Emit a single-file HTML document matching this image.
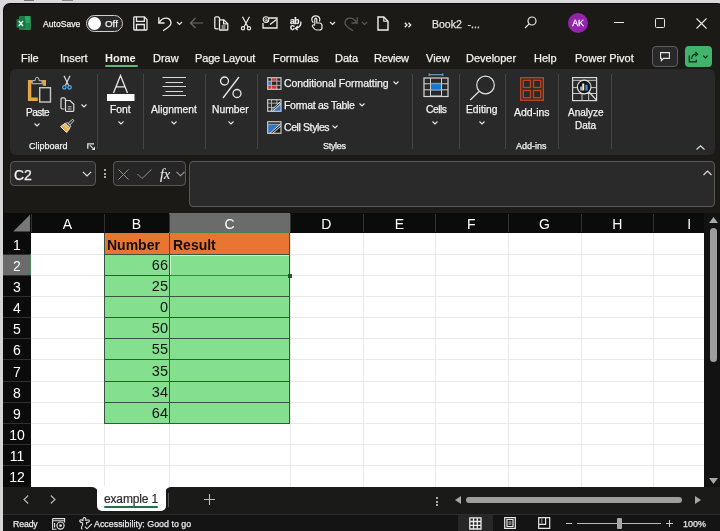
<!DOCTYPE html>
<html><head><meta charset="utf-8">
<style>
*{margin:0;padding:0;box-sizing:border-box}
html,body{width:720px;height:531px;overflow:hidden;background:#dadadc;font-family:"Liberation Sans",sans-serif}
.a{position:absolute}
#win{position:absolute;left:2.5px;top:2.5px;width:722px;height:532px;background:#1c1a17;border-top:1px solid #0b0b09;border-left:1px solid #0b0b09;border-radius:7px 8px 0 7px;overflow:hidden}
.t{position:absolute;white-space:nowrap;color:#f2f2f2;line-height:1;-webkit-text-stroke:0.25px currentColor;will-change:transform}
svg{position:absolute;overflow:visible}
.rib{position:absolute;left:10px;top:69px;width:705px;height:86px;background:#292929;border-radius:6px}
.sep{position:absolute;top:74px;width:1px;height:75px;background:#454545}
.car{position:absolute}
.hdr{position:absolute;background:#0b0b0b}
div.a:not(:empty){will-change:transform}
.ch{position:absolute;top:213px;height:20px;color:#fff;font-size:14px;text-align:center;line-height:20px;border-left:1px solid #3a3a3a}
.rh{position:absolute;left:3px;width:28px;color:#fff;font-size:14px;text-align:center}
</style></head><body>
<div id="win"></div>
<!-- title bar -->
<svg class="a" style="left:16px;top:15px" width="15" height="15" viewBox="0 0 15 15">
  <rect x="3" y="1" width="11.5" height="14" rx="1" fill="#1b7a45"/>
  <rect x="9" y="1" width="5.5" height="14" rx="0.8" fill="#2aa866"/>
  <rect x="9" y="8" width="5.5" height="7" fill="#1f8a4f"/>
  <rect x="0.5" y="4" width="9" height="9" rx="1.2" fill="#147a43"/>
  <path d="M2.8 6 L7 11 M7 6 L2.8 11" stroke="#f4f4f4" stroke-width="1.3"/>
</svg>
<div class="t" style="left:43px;top:20px;font-size:8.6px">AutoSave</div>
<div class="a" style="left:86px;top:15px;width:37px;height:17px;border:1px solid #cfcfcf;border-radius:9px;background:#292929"></div>
<div class="a" style="left:88px;top:17px;width:13px;height:13px;border-radius:50%;background:#fff"></div>
<div class="t" style="left:104.5px;top:19px;font-size:9.8px">Off</div>

<!-- save icon -->
<svg style="left:133px;top:16px" width="15" height="15" viewBox="0 0 15 15" fill="none" stroke="#ececec" stroke-width="1.3">
  <path d="M0.8 1.5 Q0.8 0.8 1.5 0.8 H11.3 L14 3.5 V13.3 Q14 14 13.3 14 H1.5 Q0.8 14 0.8 13.3 Z"/>
  <path d="M3.5 0.8 V5.3 H11.3 V0.8"/>
  <path d="M3.5 14 V8.5 H11.3 V14"/>
</svg>
<!-- undo -->
<svg style="left:157px;top:16px" width="16" height="16" viewBox="0 0 16 16" fill="none" stroke="#ececec" stroke-width="1.3">
  <path d="M1.8 1.2 V7 H7.5"/>
  <path d="M2 6.8 Q5 2 9.5 2.2 Q14 2.8 14 7.3 Q14 10 6 14.8"/>
</svg>
<svg style="left:176px;top:21px" width="7" height="5" viewBox="0 0 7 5" fill="none" stroke="#e8e8e8" stroke-width="1.1"><path d="M1 1 L3.5 3.5 L6 1"/></svg>
<!-- back arrow (disabled) -->
<svg style="left:189px;top:17px" width="15" height="12" viewBox="0 0 15 12" fill="none" stroke="#6a6a6a" stroke-width="1.2"><path d="M14 6 H1.5 M6.5 1 L1.5 6 L6.5 11"/></svg>
<!-- copy-doc icon -->
<svg style="left:214px;top:16px" width="15" height="15" viewBox="0 0 15 15" fill="none" stroke="#ececec" stroke-width="1.3">
  <path d="M4.5 12.8 H2 Q0.8 12.8 0.8 11.6 V2 Q0.8 0.8 2 0.8 H4 Q5 0.8 5.5 2 V3.8"/>
  <path d="M5.5 3.8 H9.8 L13.8 7.8 V13.4 Q13.8 14 13.2 14 H6.1 Q5.5 14 5.5 13.4 Z"/>
  <path d="M9.6 3.8 V7.8 H13.6"/>
  <path d="M7.5 10 H11.5 M7.5 12 H11.5" stroke-width="1"/>
</svg>
<!-- scissors -->
<svg style="left:240px;top:16px" width="12" height="15" viewBox="0 0 12 15" fill="none" stroke="#ececec" stroke-width="1.2">
  <path d="M2.5 0.8 L8 11 M9.5 0.8 L4 11"/>
  <circle cx="3" cy="12.2" r="1.6"/><circle cx="9" cy="12.2" r="1.6"/>
</svg>
<!-- email icon -->
<svg style="left:262px;top:16px" width="16" height="13" viewBox="0 0 16 13" fill="none" stroke="#ececec" stroke-width="1.3">
  <path d="M7 2 H15 V12 H1 V7"/><path d="M8 8.5 L14.5 3.5"/>
  <circle cx="4" cy="3.6" r="2.8" stroke-width="1.1"/><path d="M5 3.6 A1 1.2 0 1 0 5 3.7 V4.5 Q5 6.2 6.8 5.5" stroke-width="0.9"/>
</svg>
<!-- spelling abc -->
<div class="t" style="left:289.5px;top:16.5px;font-size:8.5px;letter-spacing:-0.4px;font-weight:bold;color:#ececec">ab</div>
<div class="t" style="left:289.5px;top:23px;font-size:8.5px;font-weight:bold;color:#ececec">c</div>
<svg style="left:294px;top:21px" width="8" height="9" viewBox="0 0 8 9" fill="none" stroke="#ececec" stroke-width="1.2"><path d="M6.8 0.5 Q7.5 4 5 6 Q3.5 7.3 1.5 7.3 M3.8 4.8 L1.3 7.3 L3.8 9"/></svg>
<!-- touch hand -->
<svg style="left:311px;top:15px" width="12" height="16" viewBox="0 0 12 16" fill="none" stroke="#ececec" stroke-width="1.2">
  <path d="M2.3 7.8 Q0.6 6.3 0.8 4 Q1.3 0.8 4.8 0.8 Q8.3 0.8 8.8 4 Q9 5.5 8.3 6.5"/>
  <path d="M3.8 9.5 V4.3 Q3.8 3.2 4.8 3.2 Q5.8 3.2 5.8 4.3 V8 H8.5 Q11 8.3 11 10.5 V12.5 Q11 15 8.5 15 H6 Q4 15 3 13.5 L1.5 11.5 Q1 10.5 2 10 Q3 9.5 3.8 10.5"/>
</svg>
<svg style="left:329px;top:21px" width="7" height="5" viewBox="0 0 7 5" fill="none" stroke="#e8e8e8" stroke-width="1.2"><path d="M1 1 L3.5 3.5 L6 1"/></svg>
<!-- redo disabled -->
<svg style="left:343px;top:16px" width="16" height="16" viewBox="0 0 16 16" fill="none" stroke="#5a5a5a" stroke-width="1.3">
  <path d="M14.2 1.2 V7 H8.5"/>
  <path d="M14 6.8 Q11 2 6.5 2.2 Q2 2.8 2 7.3 Q2 10 10 14.8"/>
</svg>
<svg style="left:361px;top:21px" width="7" height="5" viewBox="0 0 7 5" fill="none" stroke="#5a5a5a" stroke-width="1.1"><path d="M1 1 L3.5 3.5 L6 1"/></svg>
<!-- new doc -->
<svg style="left:377px;top:16px" width="12" height="15" viewBox="0 0 12 15" fill="none" stroke="#f0f0f0" stroke-width="1.4">
  <path d="M1 1 H6.8 L11 5.2 V14 H1 Z"/><path d="M6.8 1 V5.2 H11" stroke-width="1.1"/>
</svg>
<svg style="left:404px;top:21.5px" width="8" height="6" viewBox="0 0 8 6" fill="none" stroke="#f0f0f0" stroke-width="1.3"><path d="M0.8 0.8 L3 3 L0.8 5.2 M4.5 0.8 L6.7 3 L4.5 5.2"/></svg>
<div class="t" style="left:432px;top:19px;font-size:10.5px;color:#e2e2e2">Book2&nbsp;&nbsp;-...</div>
<!-- search -->
<svg style="left:524px;top:16px" width="13" height="13" viewBox="0 0 13 13" fill="none" stroke="#e8e8e8" stroke-width="1.2">
  <circle cx="8" cy="5" r="4"/><path d="M5.2 7.8 L1 12"/>
</svg>
<div class="a" style="left:568px;top:13px;width:20px;height:20px;border-radius:50%;background:#9423ae;color:#fff;font-size:8.8px;line-height:20px;text-align:center;-webkit-text-stroke:0.3px #fff">AK</div>
<div class="a" style="left:614px;top:22px;width:10px;height:1.2px;background:#e8e8e8"></div>
<div class="a" style="left:655px;top:18px;width:10px;height:10px;border:1.2px solid #e8e8e8;border-radius:1.5px"></div>
<svg style="left:696px;top:18px" width="11" height="11" viewBox="0 0 11 11" fill="none" stroke="#e8e8e8" stroke-width="1.1"><path d="M0.5 0.5 L10.5 10.5 M10.5 0.5 L0.5 10.5"/></svg>

<!-- tabs -->
<div class="t" style="left:21px;top:53px;font-size:11px">File</div>
<div class="t" style="left:60px;top:53px;font-size:11px">Insert</div>
<div class="t" style="left:105px;top:53px;font-size:11px;font-weight:bold;-webkit-text-stroke:0">Home</div>
<div class="a" style="left:105px;top:65px;width:33px;height:2px;background:#5cb87a;border-radius:1px"></div>
<div class="t" style="left:153px;top:53px;font-size:11px">Draw</div>
<div class="t" style="left:195px;top:53px;font-size:11px;letter-spacing:-0.15px">Page Layout</div>
<div class="t" style="left:273px;top:53px;font-size:11px">Formulas</div>
<div class="t" style="left:335px;top:53px;font-size:11px">Data</div>
<div class="t" style="left:374px;top:53px;font-size:11px;letter-spacing:-0.2px">Review</div>
<div class="t" style="left:426px;top:53px;font-size:11px">View</div>
<div class="t" style="left:466px;top:53px;font-size:11px">Developer</div>
<div class="t" style="left:534px;top:53px;font-size:11px">Help</div>
<div class="t" style="left:575px;top:53px;font-size:11px">Power Pivot</div>
<div class="a" style="left:652px;top:46px;width:26px;height:21px;border:1px solid #5e5e5e;border-radius:4px;background:#292929"></div>
<svg style="left:660px;top:52px" width="11" height="10" viewBox="0 0 11 10" fill="none" stroke="#e8e8e8" stroke-width="1.1"><path d="M0.6 0.6 H9.4 V6.4 H3.6 L1.4 8.6 V6.4 H0.6 Z"/></svg>
<div class="a" style="left:685px;top:46px;width:27px;height:21px;border-radius:4px;background:#40b46b"></div>
<svg style="left:688px;top:51px" width="21" height="12" viewBox="0 0 21 12" fill="none" stroke="#0d2614" stroke-width="1.2">
  <path d="M1.3 4.5 V10.8 H8.3 V8.8"/><path d="M3.8 8 Q3.8 3.2 8.3 3.2"/><path d="M7.3 1 L9.6 3.2 L7.3 5.4"/>
  <path d="M15.2 4.6 L17.4 6.8 L19.6 4.6"/>
</svg>

<!-- ribbon -->
<div class="rib"></div>
<div class="sep" style="left:97px"></div>
<div class="sep" style="left:143px"></div>
<div class="sep" style="left:205px"></div>
<div class="sep" style="left:257px"></div>
<div class="sep" style="left:412px"></div>
<div class="sep" style="left:459px"></div>
<div class="sep" style="left:505px"></div>
<div class="sep" style="left:558px"></div>
<div class="sep" style="left:611px"></div>
<!-- paste -->
<svg style="left:27px;top:76px" width="26" height="28" viewBox="0 0 26 28">
  <path d="M2.6 5.6 H17.3 V23.3 H2.6 Z" fill="none" stroke="#e3a640" stroke-width="3.4"/>
  <path d="M5.2 7.6 V4.6 H8 Q8.5 1.2 10.1 1.2 Q11.7 1.2 12.2 4.6 H15 V7.6 Z" fill="#282828" stroke="#a8a8a8" stroke-width="1.1"/>
  <rect x="10.8" y="9.8" width="14.5" height="18" fill="#282828"/>
  <rect x="12.7" y="11.7" width="10.8" height="14.3" fill="none" stroke="#c8c8c8" stroke-width="1.4"/>
</svg>
<div class="t" style="left:25.5px;top:108px;font-size:10px;letter-spacing:-0.5px">Paste</div>
<svg style="left:34px;top:123px" width="6" height="4" viewBox="0 0 6 4" fill="none" stroke="#e8e8e8" stroke-width="1.1"><path d="M0.5 0.5 L3 3 L5.5 0.5"/></svg>
<!-- cut -->
<svg style="left:61px;top:75px" width="12" height="15" viewBox="0 0 12 15" fill="none" stroke-width="1.2">
  <path d="M3 0.8 L7.8 11 M9 0.8 L4.2 11" stroke="#dcdcdc"/>
  <circle cx="3.4" cy="12.3" r="1.7" stroke="#4fa3e8" stroke-width="1.3"/><circle cx="8.6" cy="12.3" r="1.7" stroke="#4fa3e8" stroke-width="1.3"/>
</svg>
<!-- copy -->
<svg style="left:60px;top:97px" width="15" height="15" viewBox="0 0 15 15" fill="none" stroke="#dcdcdc" stroke-width="1.2">
  <path d="M4.5 12 H2.2 Q1 12 1 10.8 V2 Q1 0.8 2.2 0.8 H4 Q5 0.8 5.5 2 L5.5 3.5"/>
  <path d="M5.5 3.5 H10 L13.8 7.3 V13.5 Q13.8 14.3 13 14.3 H6.3 Q5.5 14.3 5.5 13.5 Z"/>
  <path d="M7.8 9.8 H11.5 M7.8 12 H11.5" stroke-width="0.9"/>
</svg>
<svg style="left:81px;top:104px" width="6" height="4" viewBox="0 0 6 4" fill="none" stroke="#e8e8e8" stroke-width="1.1"><path d="M0.5 0.5 L3 3 L5.5 0.5"/></svg>
<!-- format painter -->
<svg style="left:60px;top:119px" width="15" height="15" viewBox="0 0 16 16">
  <g transform="translate(1.2 -1.5) rotate(45 8 8) scale(0.95)">
    <path d="M4.2 9.5 H11.8 L12.8 16 H3.2 Z" fill="#e9ad42"/>
    <path d="M4.2 9.5 H11.8 L12.8 16 H3.2 Z M5 7.5 H11 V9.5 H5 Z" fill="none" stroke="#e6e6e6" stroke-width="1"/>
    <path d="M3.7 12.2 H12.3" stroke="#e6e6e6" stroke-width="0.9"/>
    <rect x="6.8" y="0.5" width="2.4" height="7" rx="1.2" fill="none" stroke="#e6e6e6" stroke-width="1"/>
  </g>
</svg>
<div class="t" style="left:29px;top:142px;font-size:9px">Clipboard</div>
<svg style="left:87px;top:143px" width="9" height="8" viewBox="0 0 9 8"><path d="M0.8 5.8 V0.8 H7" fill="none" stroke="#e0e0e0" stroke-width="1.3"/><path d="M2.8 2.2 L6 5.4" stroke="#e0e0e0" stroke-width="1.1"/><path d="M8 3.5 V7 H4.5 Z" fill="#e0e0e0"/></svg>
<!-- font -->
<svg style="left:106px;top:74px" width="29" height="28" viewBox="0 0 29 28">
  <path d="M7.5 19 L14.5 1.5 L21.5 19 M10 12.8 H19" fill="none" stroke="#e8e8e8" stroke-width="1.3"/>
  <rect x="1" y="20" width="27.5" height="7" fill="#ffffff"/>
</svg>
<div class="t" style="left:110px;top:105px;font-size:10.3px">Font</div>
<svg style="left:118px;top:121px" width="6" height="4" viewBox="0 0 6 4" fill="none" stroke="#e8e8e8" stroke-width="1.1"><path d="M0.5 0.5 L3 3 L5.5 0.5"/></svg>
<!-- alignment -->
<svg style="left:162px;top:76px" width="25" height="21" viewBox="0 0 25 21" fill="none" stroke="#d8d8d8" stroke-width="1.2">
  <path d="M0.5 1.5 H24 M3.5 6.5 H21 M0.5 10.5 H24 M3.5 15.5 H21 M0.5 19.5 H24"/>
</svg>
<div class="t" style="left:151px;top:105px;font-size:10.3px">Alignment</div>
<svg style="left:171px;top:121px" width="6" height="4" viewBox="0 0 6 4" fill="none" stroke="#e8e8e8" stroke-width="1.1"><path d="M0.5 0.5 L3 3 L5.5 0.5"/></svg>
<!-- number -->
<svg style="left:219px;top:76px" width="24" height="23" viewBox="0 0 24 23" fill="none" stroke="#e8e8e8" stroke-width="1.3">
  <circle cx="5.5" cy="5" r="4"/><circle cx="18" cy="17.5" r="4"/><path d="M20 1 L4 22"/>
</svg>
<div class="t" style="left:212px;top:105px;font-size:10.3px">Number</div>
<svg style="left:228px;top:121px" width="6" height="4" viewBox="0 0 6 4" fill="none" stroke="#e8e8e8" stroke-width="1.1"><path d="M0.5 0.5 L3 3 L5.5 0.5"/></svg>
<!-- styles -->
<svg style="left:267px;top:76.5px" width="15" height="13" viewBox="0 0 15 13">
  <rect x="4.5" y="1" width="5" height="3" fill="#e0322f"/>
  <rect x="1" y="8.5" width="9" height="3.5" fill="#e0322f"/>
  <rect x="1" y="4" width="3.5" height="4.5" fill="#3d7cc2"/>
  <rect x="0.7" y="0.7" width="13.3" height="11.6" fill="none" stroke="#c8c8c8" stroke-width="1.2"/>
  <path d="M0.7 4.2 H14 M0.7 8.4 H14 M4.5 0.7 V12.3 M9.8 0.7 V12.3" stroke="#b8b8b8" stroke-width="0.9"/>
</svg>
<div class="t" style="left:284px;top:78px;font-size:10.5px;letter-spacing:-0.05px">Conditional Formatting</div>
<svg style="left:393px;top:81px" width="6" height="4" viewBox="0 0 6 4" fill="none" stroke="#e8e8e8" stroke-width="1.1"><path d="M0.5 0.5 L3 3 L5.5 0.5"/></svg>
<svg style="left:267px;top:98.5px" width="15" height="13" viewBox="0 0 15 13">
  <path d="M4.5 12.3 L14 4 V12.3 Z" fill="#2f74c6"/>
  <rect x="0.7" y="0.7" width="13.3" height="11.6" fill="none" stroke="#c8c8c8" stroke-width="1.2"/>
  <path d="M0.7 4.2 H14 M0.7 8.4 H8 M4.5 0.7 V12.3 M9.8 0.7 V5" stroke="#b8b8b8" stroke-width="0.9"/>
  <path d="M3.5 12 L13.5 2.5 M5.5 12.5 L14 4.5" stroke="#e6e6e6" stroke-width="1"/>
</svg>
<div class="t" style="left:284px;top:100px;font-size:10.5px;letter-spacing:-0.3px">Format as Table</div>
<svg style="left:359px;top:103px" width="6" height="4" viewBox="0 0 6 4" fill="none" stroke="#e8e8e8" stroke-width="1.1"><path d="M0.5 0.5 L3 3 L5.5 0.5"/></svg>
<svg style="left:267px;top:120.5px" width="15" height="13" viewBox="0 0 15 13">
  <path d="M1 3.5 H13.5 L2.5 12.3 H1 Z" fill="#2f74c6"/>
  <path d="M4.5 12.3 L14 4.5 V12.3 Z" fill="#1d1d1d"/>
  <rect x="0.7" y="0.7" width="13.3" height="11.6" fill="none" stroke="#c8c8c8" stroke-width="1.2"/>
  <path d="M0.7 3.3 H14" stroke="#b8b8b8" stroke-width="0.9"/>
  <path d="M3 12.3 L13.5 3 M5.5 12.5 L14 5" stroke="#e6e6e6" stroke-width="1"/>
</svg>
<div class="t" style="left:284px;top:122px;font-size:10.5px;letter-spacing:-0.4px">Cell Styles</div>
<svg style="left:332px;top:125px" width="6" height="4" viewBox="0 0 6 4" fill="none" stroke="#e8e8e8" stroke-width="1.1"><path d="M0.5 0.5 L3 3 L5.5 0.5"/></svg>
<div class="t" style="left:323px;top:142px;font-size:9px;letter-spacing:-0.3px">Styles</div>
<!-- cells -->
<svg style="left:423px;top:73px" width="26" height="25" viewBox="0 0 26 25">
  <path d="M6.2 1.8 H19.8 M6.2 0.5 V3 M19.8 0.5 V3" stroke="#6fb3f0" stroke-width="1.1"/>
  <rect x="7.5" y="10.8" width="11" height="6" fill="#1476d2" stroke="#5fb0f5" stroke-width="0.8"/>
  <rect x="1" y="5" width="24" height="18.5" fill="none" stroke="#d8d8d8" stroke-width="1.2"/>
  <path d="M1 10.8 H7.5 M18.5 10.8 H25 M1 16.8 H7.5 M18.5 16.8 H25 M7.5 5 V23.5 M18.5 5 V23.5 M7.5 5 M7.5 23 H18.5" stroke="#d0d0d0" stroke-width="1"/>
  <path d="M7.5 10.3 H18.5 M7.5 17.3 H18.5" stroke="#bcbcbc" stroke-width="0.6"/>
</svg>
<div class="t" style="left:425.5px;top:105px;font-size:10.3px;letter-spacing:-0.5px">Cells</div>
<svg style="left:432px;top:121px" width="6" height="4" viewBox="0 0 6 4" fill="none" stroke="#e8e8e8" stroke-width="1.1"><path d="M0.5 0.5 L3 3 L5.5 0.5"/></svg>
<!-- editing -->
<svg style="left:468.5px;top:74.5px" width="27" height="26" viewBox="0 0 27 26" fill="none" stroke="#e0e0e0" stroke-width="1.2">
  <circle cx="16.5" cy="10" r="8.8"/><path d="M10.2 16.3 L1.2 25"/>
</svg>
<div class="t" style="left:466px;top:105px;font-size:10.3px">Editing</div>
<svg style="left:479px;top:121px" width="6" height="4" viewBox="0 0 6 4" fill="none" stroke="#e8e8e8" stroke-width="1.1"><path d="M0.5 0.5 L3 3 L5.5 0.5"/></svg>
<!-- add-ins -->
<svg style="left:520px;top:77px" width="24" height="24" viewBox="0 0 24 24" fill="none" stroke="#bd4420" stroke-width="1.4">
  <rect x="0.7" y="0.7" width="22.6" height="22.6"/>
  <rect x="3.3" y="3.3" width="7.2" height="7.2"/><rect x="13.5" y="3.3" width="7.2" height="7.2"/>
  <rect x="3.3" y="13.5" width="7.2" height="7.2"/><rect x="13.5" y="13.5" width="7.2" height="7.2"/>
</svg>
<div class="t" style="left:514px;top:107px;font-size:10.5px">Add-ins</div>
<div class="t" style="left:516px;top:142px;font-size:9px">Add-ins</div>
<!-- analyze data -->
<svg style="left:572px;top:77px" width="26" height="25" viewBox="0 0 26 25" fill="none">
  <rect x="0.6" y="0.6" width="24" height="23" stroke="#d8d8d8" stroke-width="1.2"/>
  <path d="M0.6 3.3 H24.6 M0.6 10.6 H5 M19 10.6 H24.6 M0.6 16.5 H24.6 M10 16.5 V23.6 M16.7 16.5 V23.6" stroke="#c8c8c8" stroke-width="1"/>
  <circle cx="12.2" cy="10" r="6.8" fill="#141414" stroke="#e0e0e0" stroke-width="1.2"/>
  <path d="M17 15 L24 22.6" stroke="#e0e0e0" stroke-width="1.3"/>
  <rect x="8.3" y="9.5" width="1.5" height="4" fill="#d0d0d0"/><rect x="10.2" y="6.5" width="2" height="7" fill="#e8e8e8"/><rect x="13.3" y="7.8" width="2.3" height="5.7" fill="#3c8fdc"/>
</svg>
<div class="t" style="left:568px;top:107.5px;font-size:10px">Analyze</div>
<div class="t" style="left:574.5px;top:120.5px;font-size:10px">Data</div>
<svg style="left:696px;top:145px" width="9" height="5" viewBox="0 0 9 5" fill="none" stroke="#e0e0e0" stroke-width="1.1"><path d="M0.5 4.5 L4.5 0.8 L8.5 4.5"/></svg>

<!-- formula bar -->
<div class="a" style="left:10px;top:161px;width:86px;height:25px;background:#2a2a2a;border:1px solid #575757;border-radius:4px"></div>
<div class="t" style="left:14px;top:168px;font-size:14px">C2</div>
<svg style="left:82px;top:171px" width="10" height="6" viewBox="0 0 10 6" fill="none" stroke="#e0e0e0" stroke-width="1.2"><path d="M0.8 0.8 L5 5 L9.2 0.8"/></svg>
<div class="a" style="left:104px;top:169px;width:2px;height:2px;background:#ddd;border-radius:1px"></div>
<div class="a" style="left:104px;top:172.5px;width:2px;height:2px;background:#ddd;border-radius:1px"></div>
<div class="a" style="left:104px;top:176px;width:2px;height:2px;background:#ddd;border-radius:1px"></div>
<div class="a" style="left:113px;top:161px;width:73px;height:25px;background:#262626;border:1px solid #575757;border-radius:4px"></div>
<svg style="left:118px;top:169px" width="11" height="11" viewBox="0 0 11 11" fill="none" stroke="#8e8e8e" stroke-width="1"><path d="M0.5 0.5 L10.5 10.5 M10.5 0.5 L0.5 10.5"/></svg>
<svg style="left:137px;top:169px" width="15" height="10" viewBox="0 0 15 10" fill="none" stroke="#8e8e8e" stroke-width="1"><path d="M0.5 5 L5 9.5 L14.5 0.5"/></svg>
<div class="t" style="left:160px;top:167px;font-size:14.5px;font-family:'Liberation Serif',serif;font-style:italic;color:#e8e8e8;-webkit-text-stroke:0.1px #e8e8e8">f<span style="font-size:14px">x</span></div>
<svg style="left:176px;top:171px" width="9" height="6" viewBox="0 0 9 6" fill="none" stroke="#a0a0a0" stroke-width="1.1"><path d="M0.5 0.8 L4.5 4.8 L8.5 0.8"/></svg>
<div class="a" style="left:189px;top:161px;width:526px;height:46px;background:#2a2a2a;border:1px solid #575757;border-radius:4px"></div>
<svg style="left:703px;top:170px" width="9" height="6" viewBox="0 0 9 6" fill="none" stroke="#e0e0e0" stroke-width="1.1"><path d="M0.5 5 L4.5 1 L8.5 5"/></svg>
<!-- grid -->
<div class="a" style="left:3px;top:213px;width:701px;height:274px;background:#ffffff"></div>
<div class="a" style="left:3px;top:213px;width:701px;height:20px;background:#0b0b0b"></div>
<div class="a" style="left:3px;top:213px;width:28px;height:274px;background:#0b0b0b"></div>
<svg style="left:3px;top:213px" width="28" height="20" viewBox="0 0 28 20"><path d="M27 1.8 V18.6 H10.2 Z" fill="#777"/></svg>

<div class="a" style="left:31px;top:213px;width:73px;height:20px;background:transparent;color:#fff;font-size:14px;line-height:20px;padding-top:1px;text-align:center">A</div>
<div class="a" style="left:31px;top:214px;width:1px;height:18px;background:#333"></div>
<div class="a" style="left:104px;top:213px;width:65px;height:20px;background:transparent;color:#fff;font-size:14px;line-height:20px;padding-top:1px;text-align:center">B</div>
<div class="a" style="left:104px;top:214px;width:1px;height:18px;background:#333"></div>
<div class="a" style="left:169px;top:213px;width:121px;height:20px;background:#6b6b6b;color:#fff;font-size:14px;line-height:20px;padding-top:1px;text-align:center">C</div>
<div class="a" style="left:169px;top:214px;width:1px;height:18px;background:#333"></div>
<div class="a" style="left:290px;top:213px;width:72.69999999999999px;height:20px;background:transparent;color:#fff;font-size:14px;line-height:20px;padding-top:1px;text-align:center">D</div>
<div class="a" style="left:290px;top:214px;width:1px;height:18px;background:#333"></div>
<div class="a" style="left:362.7px;top:213px;width:72.69999999999999px;height:20px;background:transparent;color:#fff;font-size:14px;line-height:20px;padding-top:1px;text-align:center">E</div>
<div class="a" style="left:362.7px;top:214px;width:1px;height:18px;background:#333"></div>
<div class="a" style="left:435.4px;top:213px;width:72.70000000000005px;height:20px;background:transparent;color:#fff;font-size:14px;line-height:20px;padding-top:1px;text-align:center">F</div>
<div class="a" style="left:435.4px;top:214px;width:1px;height:18px;background:#333"></div>
<div class="a" style="left:508.1px;top:213px;width:72.69999999999993px;height:20px;background:transparent;color:#fff;font-size:14px;line-height:20px;padding-top:1px;text-align:center">G</div>
<div class="a" style="left:508.1px;top:214px;width:1px;height:18px;background:#333"></div>
<div class="a" style="left:580.8px;top:213px;width:72.60000000000002px;height:20px;background:transparent;color:#fff;font-size:14px;line-height:20px;padding-top:1px;text-align:center">H</div>
<div class="a" style="left:580.8px;top:214px;width:1px;height:18px;background:#333"></div>
<div class="a" style="left:653.4px;top:213px;width:72.60000000000002px;height:20px;background:transparent;color:#fff;font-size:14px;line-height:20px;padding-top:1px;text-align:center">I</div>
<div class="a" style="left:653.4px;top:214px;width:1px;height:18px;background:#333"></div>
<div class="a" style="left:104px;top:233px;width:1px;height:254px;background:#e9e9e9"></div>
<div class="a" style="left:169px;top:233px;width:1px;height:254px;background:#e9e9e9"></div>
<div class="a" style="left:290px;top:233px;width:1px;height:254px;background:#e9e9e9"></div>
<div class="a" style="left:362.7px;top:233px;width:1px;height:254px;background:#e9e9e9"></div>
<div class="a" style="left:435.4px;top:233px;width:1px;height:254px;background:#e9e9e9"></div>
<div class="a" style="left:508.1px;top:233px;width:1px;height:254px;background:#e9e9e9"></div>
<div class="a" style="left:580.8px;top:233px;width:1px;height:254px;background:#e9e9e9"></div>
<div class="a" style="left:653.4px;top:233px;width:1px;height:254px;background:#e9e9e9"></div>
<div class="a" style="left:31px;top:254px;width:673px;height:1px;background:#e9e9e9"></div>
<div class="a" style="left:31px;top:275px;width:673px;height:1px;background:#e9e9e9"></div>
<div class="a" style="left:31px;top:296px;width:673px;height:1px;background:#e9e9e9"></div>
<div class="a" style="left:31px;top:317px;width:673px;height:1px;background:#e9e9e9"></div>
<div class="a" style="left:31px;top:338px;width:673px;height:1px;background:#e9e9e9"></div>
<div class="a" style="left:31px;top:359px;width:673px;height:1px;background:#e9e9e9"></div>
<div class="a" style="left:31px;top:381px;width:673px;height:1px;background:#e9e9e9"></div>
<div class="a" style="left:31px;top:402px;width:673px;height:1px;background:#e9e9e9"></div>
<div class="a" style="left:31px;top:423px;width:673px;height:1px;background:#e9e9e9"></div>
<div class="a" style="left:31px;top:444px;width:673px;height:1px;background:#e9e9e9"></div>
<div class="a" style="left:31px;top:465px;width:673px;height:1px;background:#e9e9e9"></div>
<div class="a" style="left:3px;top:233px;width:28px;height:21px;background:transparent;color:#fff;font-size:14px;line-height:25px;text-align:center">1</div>
<div class="a" style="left:3px;top:254px;width:28px;height:21px;background:#6b6b6b;color:#fff;font-size:14px;line-height:25px;text-align:center">2</div>
<div class="a" style="left:3px;top:254px;width:28px;height:1px;background:#2f2f2f"></div>
<div class="a" style="left:3px;top:275px;width:28px;height:21px;background:transparent;color:#fff;font-size:14px;line-height:25px;text-align:center">3</div>
<div class="a" style="left:3px;top:275px;width:28px;height:1px;background:#2f2f2f"></div>
<div class="a" style="left:3px;top:296px;width:28px;height:21px;background:transparent;color:#fff;font-size:14px;line-height:25px;text-align:center">4</div>
<div class="a" style="left:3px;top:296px;width:28px;height:1px;background:#2f2f2f"></div>
<div class="a" style="left:3px;top:317px;width:28px;height:21px;background:transparent;color:#fff;font-size:14px;line-height:25px;text-align:center">5</div>
<div class="a" style="left:3px;top:317px;width:28px;height:1px;background:#2f2f2f"></div>
<div class="a" style="left:3px;top:338px;width:28px;height:21px;background:transparent;color:#fff;font-size:14px;line-height:25px;text-align:center">6</div>
<div class="a" style="left:3px;top:338px;width:28px;height:1px;background:#2f2f2f"></div>
<div class="a" style="left:3px;top:359px;width:28px;height:22px;background:transparent;color:#fff;font-size:14px;line-height:26px;text-align:center">7</div>
<div class="a" style="left:3px;top:359px;width:28px;height:1px;background:#2f2f2f"></div>
<div class="a" style="left:3px;top:381px;width:28px;height:21px;background:transparent;color:#fff;font-size:14px;line-height:25px;text-align:center">8</div>
<div class="a" style="left:3px;top:381px;width:28px;height:1px;background:#2f2f2f"></div>
<div class="a" style="left:3px;top:402px;width:28px;height:21px;background:transparent;color:#fff;font-size:14px;line-height:25px;text-align:center">9</div>
<div class="a" style="left:3px;top:402px;width:28px;height:1px;background:#2f2f2f"></div>
<div class="a" style="left:3px;top:423px;width:28px;height:21px;background:transparent;color:#fff;font-size:14px;line-height:25px;text-align:center">10</div>
<div class="a" style="left:3px;top:423px;width:28px;height:1px;background:#2f2f2f"></div>
<div class="a" style="left:3px;top:444px;width:28px;height:21px;background:transparent;color:#fff;font-size:14px;line-height:25px;text-align:center">11</div>
<div class="a" style="left:3px;top:444px;width:28px;height:1px;background:#2f2f2f"></div>
<div class="a" style="left:3px;top:465px;width:28px;height:21px;background:transparent;color:#fff;font-size:14px;line-height:25px;text-align:center">12</div>
<div class="a" style="left:3px;top:465px;width:28px;height:1px;background:#2f2f2f"></div>
<div class="a" style="left:104px;top:233px;width:186px;height:21px;background:#e97533"></div>
<div class="t" style="left:107px;top:233px;line-height:21px;font-size:14px;font-weight:bold;color:#111;padding-top:2px;-webkit-text-stroke:0">Number</div>
<div class="t" style="left:173px;top:233px;line-height:21px;font-size:14px;font-weight:bold;color:#111;padding-top:2px;-webkit-text-stroke:0">Result</div>
<div class="a" style="left:104px;top:254px;width:186px;height:169px;background:#84e08f"></div>
<div class="a" style="left:104px;top:255px;width:64px;height:21px;line-height:21px;font-size:14.5px;color:#111;text-align:right">66</div>
<div class="a" style="left:104px;top:276px;width:64px;height:21px;line-height:21px;font-size:14.5px;color:#111;text-align:right">25</div>
<div class="a" style="left:104px;top:297px;width:64px;height:21px;line-height:21px;font-size:14.5px;color:#111;text-align:right">0</div>
<div class="a" style="left:104px;top:318px;width:64px;height:21px;line-height:21px;font-size:14.5px;color:#111;text-align:right">50</div>
<div class="a" style="left:104px;top:339px;width:64px;height:21px;line-height:21px;font-size:14.5px;color:#111;text-align:right">55</div>
<div class="a" style="left:104px;top:360px;width:64px;height:22px;line-height:22px;font-size:14.5px;color:#111;text-align:right">35</div>
<div class="a" style="left:104px;top:382px;width:64px;height:21px;line-height:21px;font-size:14.5px;color:#111;text-align:right">34</div>
<div class="a" style="left:104px;top:403px;width:64px;height:21px;line-height:21px;font-size:14.5px;color:#111;text-align:right">64</div>
<div class="a" style="left:104px;top:254px;width:186px;height:1px;background:#36573d"></div>
<div class="a" style="left:104px;top:275px;width:186px;height:1px;background:#36573d"></div>
<div class="a" style="left:104px;top:296px;width:186px;height:1px;background:#36573d"></div>
<div class="a" style="left:104px;top:317px;width:186px;height:1px;background:#36573d"></div>
<div class="a" style="left:104px;top:338px;width:186px;height:1px;background:#36573d"></div>
<div class="a" style="left:104px;top:359px;width:186px;height:1px;background:#36573d"></div>
<div class="a" style="left:104px;top:381px;width:186px;height:1px;background:#36573d"></div>
<div class="a" style="left:104px;top:402px;width:186px;height:1px;background:#36573d"></div>
<div class="a" style="left:104px;top:423px;width:186px;height:1px;background:#36573d"></div>
<div class="a" style="left:104px;top:233px;width:1px;height:191px;background:#36573d"></div>
<div class="a" style="left:169px;top:233px;width:1px;height:191px;background:#36573d"></div>
<div class="a" style="left:289px;top:233px;width:1px;height:191px;background:#36573d"></div>
<div class="a" style="left:170px;top:255px;width:119px;height:20px;border:1px solid #c8f5cc;border-right:none;border-bottom:none"></div>
<div class="a" style="left:170px;top:275px;width:119px;height:1px;background:#4f7f58"></div>
<div class="a" style="left:288px;top:274px;width:4px;height:4px;background:#1e5b30"></div>

<div class="a" style="left:169px;top:232px;width:121px;height:1px;background:#4a7a52"></div>
<div class="a" style="left:30px;top:254px;width:1px;height:21px;background:#4a8a58"></div>
<!-- vertical scrollbar -->
<div class="a" style="left:704px;top:213px;width:16px;height:274px;background:#121212"></div>
<svg style="left:709px;top:217px" width="9" height="6" viewBox="0 0 9 6"><path d="M0 6 L4.5 0 L9 6 Z" fill="#a8a8a8"/></svg>
<div class="a" style="left:710px;top:228px;width:7px;height:134px;background:#9e9e9e;border-radius:4px"></div>
<svg style="left:709px;top:478px" width="9" height="6" viewBox="0 0 9 6"><path d="M0 0 L4.5 6 L9 0 Z" fill="#a8a8a8"/></svg>
<!-- sheet tabs -->
<div class="a" style="left:90px;top:487px;width:80px;height:6px;background:#fff"></div>
<div class="a" style="left:3px;top:487px;width:95px;height:27px;background:#1a1a18;border-radius:0 6px 0 0"></div>
<div class="a" style="left:165px;top:487px;width:555px;height:27px;background:#1a1a18;border-radius:6px 0 0 0"></div>
<svg style="left:23px;top:495px" width="6" height="9" viewBox="0 0 6 9" fill="none" stroke="#bdbdbd" stroke-width="1.1"><path d="M5.2 0.5 L1 4.5 L5.2 8.5"/></svg>
<svg style="left:50px;top:495px" width="6" height="9" viewBox="0 0 6 9" fill="none" stroke="#bdbdbd" stroke-width="1.1"><path d="M0.8 0.5 L5 4.5 L0.8 8.5"/></svg>
<div class="a" style="left:97px;top:486px;width:69px;height:25px;background:#ffffff;border-radius:0 0 5px 5px"></div>
<div class="t" style="left:104px;top:493px;font-size:12px;color:#2a2a2a;letter-spacing:-0.15px;-webkit-text-stroke:0.2px #2a2a2a">example 1</div>
<div class="a" style="left:104px;top:506px;width:54px;height:2px;background:#217346;border-radius:1px"></div>
<div class="a" style="left:168px;top:493px;width:1px;height:14px;background:#555"></div>
<svg style="left:204px;top:494px" width="11" height="11" viewBox="0 0 11 11" fill="none" stroke="#bdbdbd" stroke-width="1.1"><path d="M5.5 0 V11 M0 5.5 H11"/></svg>
<div class="a" style="left:436px;top:497px;width:2px;height:2px;background:#ddd;border-radius:1px"></div>
<div class="a" style="left:436px;top:500.5px;width:2px;height:2px;background:#ddd;border-radius:1px"></div>
<div class="a" style="left:436px;top:504px;width:2px;height:2px;background:#ddd;border-radius:1px"></div>
<svg style="left:455px;top:496px" width="6" height="8" viewBox="0 0 6 8"><path d="M6 0 L0 4 L6 8 Z" fill="#a8a8a8"/></svg>
<div class="a" style="left:466px;top:497px;width:216px;height:6px;background:#9e9e9e;border-radius:3px"></div>
<svg style="left:695px;top:496px" width="6" height="8" viewBox="0 0 6 8"><path d="M0 0 L6 4 L0 8 Z" fill="#a8a8a8"/></svg>
<!-- status bar -->
<div class="a" style="left:3px;top:514px;width:717px;height:17px;background:#141414;border-top:1px solid #2c2c2c"></div>
<div class="t" style="left:13px;top:520px;font-size:8.7px;color:#e8e8e8;letter-spacing:-0.1px">Ready</div>
<svg style="left:52px;top:518px" width="14" height="12" viewBox="0 0 14 12" fill="none" stroke="#e0e0e0" stroke-width="1.1">
  <path d="M0.6 0.6 H12.6 V4.5 M0.6 0.6 V11.2 H4.5 M0.6 2.8 H12.6 M2.6 5 V9.5"/>
  <circle cx="8.5" cy="7.6" r="3.6" fill="#141414" stroke-width="1.2"/><circle cx="8.5" cy="7.6" r="1.4" fill="#e0e0e0" stroke="none"/>
</svg>
<svg style="left:79px;top:517px" width="14" height="13" viewBox="0 0 14 13" fill="none" stroke="#e0e0e0" stroke-width="1.1">
  <path d="M3.6 5.6 Q1 5.6 0.7 3.8 Q1 2.6 2.5 3 L4 3.4 Q3.8 0.6 5.4 0.6 Q7 0.6 6.8 3.4 L8.6 3 Q10.2 2.7 10.4 3.8 Q10.2 5.5 7.6 5.6 V7.6"/>
  <path d="M3.6 5.6 Q4 8.3 2.6 10 Q2 11.8 3.4 12.3"/>
  <path d="M6 9.6 L8 11.8 L12.9 6.8"/>
</svg>
<div class="t" style="left:94px;top:520px;font-size:8.9px;color:#e8e8e8;letter-spacing:0px">Accessibility: Good to go</div>
<div class="a" style="left:458px;top:515px;width:35px;height:16px;background:#272727"></div>
<svg style="left:469px;top:517px" width="13" height="13" viewBox="0 0 13 13" fill="none" stroke="#ececec" stroke-width="1.3"><path d="M0.8 0.8 H12 V12 H0.8 Z M0.8 4.5 H12 M0.8 8.3 H12 M4.5 0.8 V12 M8.3 0.8 V12"/></svg>
<svg style="left:504px;top:517px" width="12" height="12" viewBox="0 0 12 12" fill="none" stroke="#e6e6e6" stroke-width="1.2"><path d="M0.7 0.7 H11.3 V11.3 H0.7 Z M3 2.5 H9 V9.5 H3 Z" /><path d="M4.5 5 H7.5 M4.5 7 H7.5" stroke-width="0.9"/></svg>
<svg style="left:538px;top:517px" width="13" height="12" viewBox="0 0 13 12" fill="none" stroke="#e6e6e6" stroke-width="1.2"><path d="M0.7 0.7 H11.7 V11.3 H0.7 Z M0.7 7.3 H7.6 V0.7"/><path d="M3.8 0.7 V6.5" stroke="#9a9a9a" stroke-width="1"/></svg>
<div class="a" style="left:566px;top:523px;width:6px;height:1px;background:#c8c8c8"></div>
<div class="a" style="left:577px;top:523px;width:84px;height:1px;background:#b8b8b8"></div>
<div class="a" style="left:617px;top:518px;width:5px;height:11px;background:#a8a8a8;border-radius:1px"></div>
<svg style="left:666px;top:520px" width="7" height="7" viewBox="0 0 7 7" fill="none" stroke="#c8c8c8" stroke-width="1"><path d="M3.5 0 V7 M0 3.5 H7"/></svg>
<div class="t" style="left:683px;top:520px;font-size:9px;color:#e8e8e8">100%</div>
<!-- top strip marks -->
<div class="a" style="left:0;top:40px;width:2.5px;height:491px;background:#d6d6d6"></div>
<div class="a" style="left:24px;top:0;width:10px;height:1px;background:#777"></div>
<div class="a" style="left:62px;top:0;width:11px;height:1px;background:#888"></div>
</body></html>
